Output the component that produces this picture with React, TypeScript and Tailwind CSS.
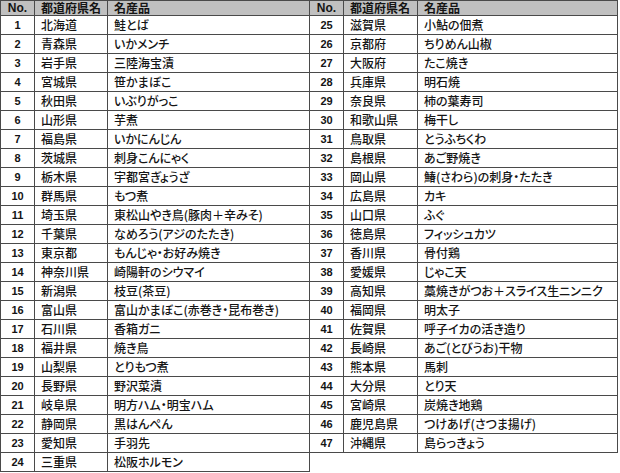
import React from "react";

type Row = [number, string, string];

const leftRows: Row[] = [
  [1, "北海道", "鮭とば"],
  [2, "青森県", "いかメンチ"],
  [3, "岩手県", "三陸海宝漬"],
  [4, "宮城県", "笹かまぼこ"],
  [5, "秋田県", "いぶりがっこ"],
  [6, "山形県", "芋煮"],
  [7, "福島県", "いかにんじん"],
  [8, "茨城県", "刺身こんにゃく"],
  [9, "栃木県", "宇都宮ぎょうざ"],
  [10, "群馬県", "もつ煮"],
  [11, "埼玉県", "東松山やき鳥(豚肉＋辛みそ)"],
  [12, "千葉県", "なめろう(アジのたたき)"],
  [13, "東京都", "もんじゃ・お好み焼き"],
  [14, "神奈川県", "崎陽軒のシウマイ"],
  [15, "新潟県", "枝豆(茶豆)"],
  [16, "富山県", "富山かまぼこ(赤巻き・昆布巻き)"],
  [17, "石川県", "香箱ガニ"],
  [18, "福井県", "焼き鳥"],
  [19, "山梨県", "とりもつ煮"],
  [20, "長野県", "野沢菜漬"],
  [21, "岐阜県", "明方ハム・明宝ハム"],
  [22, "静岡県", "黒はんぺん"],
  [23, "愛知県", "手羽先"],
  [24, "三重県", "松阪ホルモン"],
];

const rightRows: Row[] = [
  [25, "滋賀県", "小鮎の佃煮"],
  [26, "京都府", "ちりめん山椒"],
  [27, "大阪府", "たこ焼き"],
  [28, "兵庫県", "明石焼"],
  [29, "奈良県", "柿の葉寿司"],
  [30, "和歌山県", "梅干し"],
  [31, "鳥取県", "とうふちくわ"],
  [32, "島根県", "あご野焼き"],
  [33, "岡山県", "鰆(さわら)の刺身・たたき"],
  [34, "広島県", "カキ"],
  [35, "山口県", "ふぐ"],
  [36, "徳島県", "フィッシュカツ"],
  [37, "香川県", "骨付鶏"],
  [38, "愛媛県", "じゃこ天"],
  [39, "高知県", "藁焼きがつお＋スライス生ニンニク"],
  [40, "福岡県", "明太子"],
  [41, "佐賀県", "呼子イカの活き造り"],
  [42, "長崎県", "あご(とびうお)干物"],
  [43, "熊本県", "馬刺"],
  [44, "大分県", "とり天"],
  [45, "宮崎県", "炭焼き地鶏"],
  [46, "鹿児島県", "つけあげ(さつま揚げ)"],
  [47, "沖縄県", "島らっきょう"],
];

const cell = "flex items-center border-r border-b border-[#4a4a4a] whitespace-nowrap leading-none";

// one half of the sheet: No. / prefecture / product
function PrefTable({ rows, widths, first }: { rows: Row[]; widths: [string, string, string]; first?: boolean }) {
  return (
    <div className={`flex flex-col border-t border-[#4a4a4a] ${first ? "border-l" : ""}`}>
      <div className="flex h-[15px] bg-[#c0c0c0] font-bold text-[12px]">
        <div className={`${cell} ${widths[0]} justify-center font-['Liberation_Sans',sans-serif]`}>No.</div>
        <div className={`${cell} ${widths[1]} pl-[6px]`}>都道府県名</div>
        <div className={`${cell} ${widths[2]} pl-[6px]`}>名産品</div>
      </div>
      {rows.map(([no, pref, item]) => (
        <div key={no} className="flex h-[19px] bg-white text-[12px] font-medium">
          <div className={`${cell} ${widths[0]} justify-center font-['Liberation_Sans',sans-serif] font-bold text-[11px]`}>{no}</div>
          <div className={`${cell} ${widths[1]} pl-[6px]`}>{pref}</div>
          <div className={`${cell} ${widths[2]} pl-[6px]`}>{item}</div>
        </div>
      ))}
    </div>
  );
}

export default function App() {
  return (
    <div className="w-[620px] h-[473px] bg-white text-[#141414] font-['Noto_Sans_CJK_JP',sans-serif] [font-feature-settings:'palt'] overflow-hidden">
      <div className="flex items-start">
        <PrefTable rows={leftRows} widths={["w-[34px]", "w-[73px]", "w-[202px]"]} first />
        <PrefTable rows={rightRows} widths={["w-[34px]", "w-[74px]", "w-[200px]"]} />
      </div>
    </div>
  );
}
